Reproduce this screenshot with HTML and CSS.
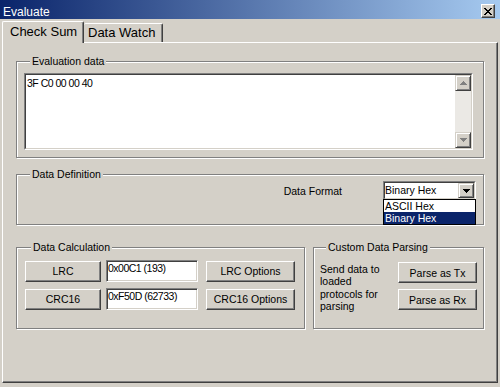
FILE: index.html
```html
<!DOCTYPE html>
<html>
<head>
<meta charset="utf-8">
<link rel="stylesheet" href="styles.css">
</head>
<body>
<div class="window">
  <div class="titlebar">
    <span class="title">Evaluate</span>
    <button class="close" aria-label="Close"><svg width="8" height="7" viewBox="0 0 8 7"><path d="M0 0h2v1h-2z M6 0h2v1h-2z M1 1h2v1h-2z M5 1h2v1h-2z M2 2h4v1h-4z M3 3h2v1h-2z M2 4h4v1h-4z M1 5h2v1h-2z M5 5h2v1h-2z M0 6h2v1h-2z M6 6h2v1h-2z" fill="#000"/></svg></button>
  </div>
  <div class="tabs">
    <div class="tab active">Check Sum</div>
    <div class="tab">Data Watch</div>
  </div>
  <div class="panel">
    <fieldset class="group g-eval">
      <legend>Evaluation data</legend>
      <div class="memo">
        <div class="memo-in">
          <div class="memo-text">3F C0 00 00 40</div>
          <div class="vscroll">
            <div class="sbtn"><svg width="7" height="4" viewBox="0 0 7 4"><path d="M3 0h1v1h1v1h1v1h1v1h-7v-1h1v-1h1v-1h1z" fill="#808080"/></svg></div>
            <div class="track"></div>
            <div class="sbtn"><svg width="7" height="4" viewBox="0 0 7 4"><path d="M0 0h7v1h-1v1h-1v1h-1v1h-1v-1h-1v-1h-1v-1h-1z" fill="#808080"/></svg></div>
          </div>
        </div>
      </div>
    </fieldset>
    <fieldset class="group g-def">
      <legend>Data Definition</legend>
      <div class="def-row">
        <span class="label">Data Format</span>
        <div class="combo">
          <div class="combo-in">
            <span class="combo-value">Binary Hex</span>
            <span class="combo-btn"><svg width="7" height="4" viewBox="0 0 7 4"><path d="M0 0h7v1h-1v1h-1v1h-1v1h-1v-1h-1v-1h-1v-1h-1z" fill="#000"/></svg></span>
          </div>
          <ul class="combo-list">
            <li>ASCII Hex</li>
            <li class="sel">Binary Hex</li>
          </ul>
        </div>
      </div>
    </fieldset>
    <div class="bottom-row">
      <fieldset class="group g-calc">
        <legend>Data Calculation</legend>
        <div class="calc-grid">
          <button class="btn">LRC</button>
          <div class="edit">0x00C1 (193)</div>
          <button class="btn opt">LRC Options</button>
          <button class="btn">CRC16</button>
          <div class="edit">0xF50D (62733)</div>
          <button class="btn opt">CRC16 Options</button>
        </div>
      </fieldset>
      <fieldset class="group g-parse">
        <legend>Custom Data Parsing</legend>
        <div class="parse-row">
          <p class="parse-text">Send data to loaded protocols for parsing</p>
          <div class="parse-btns">
            <button class="btn">Parse as Tx</button>
            <button class="btn">Parse as Rx</button>
          </div>
        </div>
      </fieldset>
    </div>
  </div>
</div>
</body>
</html>
```

FILE: styles.css
```css
* { box-sizing: border-box; }
html, body { margin: 0; padding: 0; }
body {
  width: 500px;
  height: 387px;
  overflow: hidden;
  background: #d4d0c8;
  font-family: "Liberation Sans", Arial, sans-serif;
  font-size: 10.5px;
  color: #000;
}
.window {
  width: 500px;
  height: 387px;
  background: #d4d0c8;
  display: flex;
  flex-direction: column;
}
.titlebar {
  height: 19px;
  flex: none;
  background: linear-gradient(to right, #0a246a, #a6caf0);
  display: flex;
  align-items: flex-start;
  justify-content: space-between;
  padding: 0 5px 0 3px;
}
.title {
  color: #fff;
  font-size: 12px;
  line-height: 14px;
  margin-top: 5px;
}
.close {
  width: 14px;
  height: 14px;
  margin-top: 4px;
  padding: 0;
  background: #d4d0c8;
  border: 1px solid;
  border-color: #fff #404040 #404040 #fff;
  box-shadow: inset -1px -1px #808080;
  display: flex;
  align-items: center;
  justify-content: center;
}
.close svg { display: block; }

.tabs {
  height: 23px;
  flex: none;
  display: flex;
  align-items: flex-start;
  padding-left: 2px;
}
.tab {
  font-size: 13px;
  line-height: 15px;
  background: #d4d0c8;
  border-top: 1px solid #fff;
  border-right: 1px solid #404040;
  border-radius: 2px 2px 0 0;
  box-shadow: inset -1px 0 #808080;
}
.tab.active {
  position: relative;
  z-index: 1;
  width: 82px;
  height: 22px;
  margin-top: 2px;
  padding: 2px 0 0 7px;
  border-left: 1px solid #fff;
}
.tab:not(.active) {
  width: 79px;
  height: 19px;
  margin-top: 4px;
  padding: 1px 0 0 4px;
}

.panel {
  width: 496px;
  height: 341px;
  margin-left: 2px;
  flex: none;
  border: 1px solid;
  border-color: #fff #404040 #404040 #fff;
  box-shadow: inset -1px -1px #808080;
  padding: 11px 13px 0 13px;
}

.group {
  margin: 0;
  min-width: 0;
  border: 1px solid #808080;
  box-shadow: inset 1px 1px #fff, 1px 1px #fff;
}
.group legend {
  margin-left: 6px;
  padding: 0 2px;
  line-height: 14px;
  background: #d4d0c8;
}

.g-eval { padding: 5px 11px 7px 7px; }
.memo {
  width: 449px;
  height: 77px;
  border: 1px solid;
  border-color: #808080 #fff #fff #808080;
}
.memo-in {
  height: 100%;
  border: 1px solid;
  border-color: #404040 #d4d0c8 #d4d0c8 #404040;
  background: #fff;
  display: flex;
}
.memo-text {
  flex: 1;
  font-size: 10.5px;
  letter-spacing: -0.5px;
  line-height: 12px;
  padding: 2px 1px;
}
.vscroll {
  width: 16px;
  display: flex;
  flex-direction: column;
}
.sbtn {
  height: 16px;
  flex: none;
  background: #d4d0c8;
  border: 1px solid;
  border-color: #d4d0c8 #404040 #404040 #d4d0c8;
  box-shadow: inset 1px 1px #fff, inset -1px -1px #808080;
  display: flex;
  align-items: center;
  justify-content: center;
}
.sbtn svg { display: block; }
.track {
  flex: 1;
  background: #ebe9e5;
}

.g-def {
  margin-top: 9px;
  padding: 0 7px 24px 7px;
}
.def-row {
  display: flex;
  justify-content: flex-end;
  align-items: center;
  gap: 41px;
}
.label { line-height: 14px; }
.combo {
  position: relative;
  width: 93px;
  height: 19px;
  border: 1px solid;
  border-color: #808080 #fff #fff #808080;
}
.combo-in {
  height: 100%;
  border: 1px solid;
  border-color: #404040 #d4d0c8 #d4d0c8 #404040;
  background: #fff;
  display: flex;
}
.combo-value {
  flex: 1;
  line-height: 15px;
  padding-left: 0;
}
.combo-btn {
  width: 16px;
  height: 15px;
  background: #d4d0c8;
  border: 1px solid;
  border-color: #d4d0c8 #404040 #404040 #d4d0c8;
  box-shadow: inset 1px 1px #fff, inset -1px -1px #808080;
  display: flex;
  align-items: center;
  justify-content: center;
}
.combo-btn svg { display: block; }
.combo-list {
  position: absolute;
  top: 100%;
  left: -1px;
  width: 93px;
  margin: 0;
  padding: 0;
  list-style: none;
  background: #fff;
  border: 1px solid #000;
  z-index: 2;
}
.combo-list li {
  height: 12px;
  line-height: 12px;
  padding-left: 1px;
}
.combo-list li.sel {
  background: #0a246a;
  color: #fff;
}

.bottom-row {
  margin-top: 15px;
  display: flex;
  gap: 8px;
}
.g-calc {
  width: 289px;
  padding: 6px 0 16px 8px;
}
.calc-grid {
  display: grid;
  grid-template-columns: 76px 92px 92px;
  grid-template-rows: 22px 22px;
  column-gap: 5px;
  row-gap: 6px;
  align-items: center;
}
.btn {
  font: inherit;
  color: #000;
  height: 21px;
  padding: 0;
  background: #d4d0c8;
  border: 1px solid;
  border-color: #fff #404040 #404040 #fff;
  box-shadow: inset -1px -1px #808080;
}
.opt { margin-left: 3px; }
.edit {
  height: 22px;
  font-size: 10.5px;
  letter-spacing: -0.5px;
  line-height: 12px;
  padding: 1px 1px 0;
  background: #fff;
  border: 1px solid;
  border-color: #808080 #fff #fff #808080;
  box-shadow: inset 1px 1px #404040, inset -1px -1px #d4d0c8;
}

.g-parse {
  width: 171px;
  padding: 0 6px 16px 6px;
}
.parse-row {
  display: flex;
  justify-content: space-between;
  align-items: flex-start;
}
.parse-text {
  width: 68px;
  margin: 9px 0 0;
  line-height: 12.3px;
}
.parse-btns {
  margin-top: 8px;
  display: flex;
  flex-direction: column;
  gap: 6px;
}
.parse-btns .btn { width: 79px; }
```
